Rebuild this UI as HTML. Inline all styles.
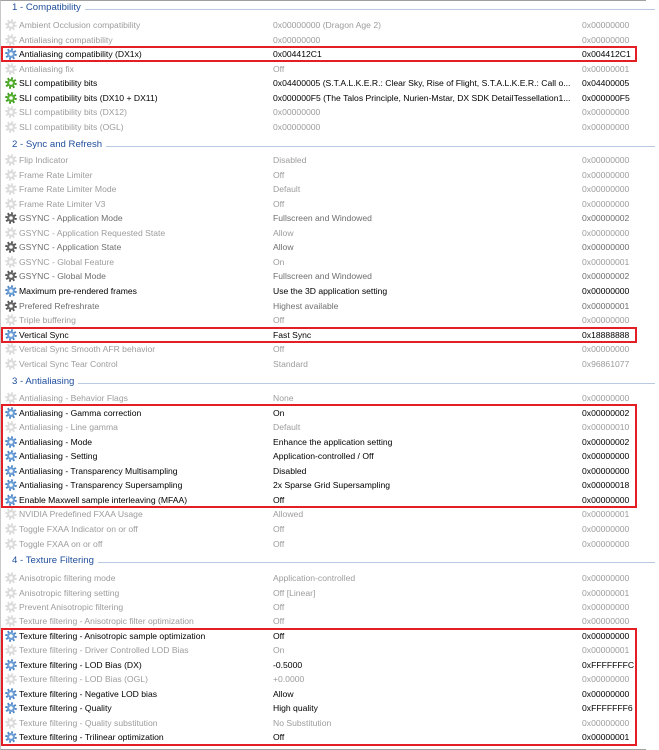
<!DOCTYPE html>
<html><head><meta charset="utf-8"><style>
html,body{margin:0;padding:0;background:#fff;}
body{width:659px;height:750px;position:relative;overflow:hidden;font-family:"Liberation Sans",Arial,sans-serif;font-size:8.6px;color:#000;}
.frame{position:absolute;left:0;top:0;width:645px;height:748px;border-top:1px solid #a0a0a0;border-left:1px solid #c8c8c8;border-bottom:1px solid #a0a0a0;}
.r{position:absolute;left:0;width:659px;height:14px;line-height:14px;white-space:nowrap;}
.r svg{position:absolute;left:5px;top:1px;width:12px;height:12px;}
.n{position:absolute;left:19px;}
.v{position:absolute;left:273px;}
.h{position:absolute;left:582px;}
.f{color:#9c9c9c;}
.d{color:#6e6e6e;}
.hd{position:absolute;left:0;width:659px;height:14px;line-height:14px;}
.hd span{position:absolute;left:12px;color:#1f4e9c;font-size:9.6px;background:#fff;padding-right:4px;}
.hd i{position:absolute;left:12px;right:4px;top:8px;border-top:1px solid #b9c9e2;}
.box{position:absolute;left:1px;width:632px;border:2px solid #e31e24;}
</style></head><body>
<svg width="0" height="0" style="position:absolute">
<defs>
<symbol id="gf" viewBox="0 0 12 12"><circle cx="6" cy="6" r="4.6" fill="none" stroke="#dcdcdc" stroke-width="2.4" stroke-dasharray="1.8 1.8"/><circle cx="6" cy="6" r="4" fill="#dcdcdc"/><circle cx="6" cy="6" r="1.8" fill="#fff"/></symbol>
<symbol id="gd" viewBox="0 0 12 12"><circle cx="6" cy="6" r="4.6" fill="none" stroke="#555" stroke-width="2.4" stroke-dasharray="1.8 1.8"/><circle cx="6" cy="6" r="4" fill="#666"/><circle cx="6" cy="6" r="1.8" fill="#fff"/></symbol>
<symbol id="gb" viewBox="0 0 12 12"><circle cx="6" cy="6" r="4.6" fill="none" stroke="#4f86c6" stroke-width="2.4" stroke-dasharray="1.8 1.8"/><circle cx="6" cy="6" r="4" fill="#6d9fd6"/><circle cx="6" cy="6" r="1.8" fill="#fff"/></symbol>
<symbol id="gg" viewBox="0 0 12 12"><circle cx="6" cy="6" r="4.6" fill="none" stroke="#3d9a1e" stroke-width="2.4" stroke-dasharray="1.8 1.8"/><circle cx="6" cy="6" r="4" fill="#55b02e"/><circle cx="6" cy="6" r="1.8" fill="#fff"/></symbol>
</defs></svg>
<div class="frame"></div>

<div class="hd" style="top:1px"><i></i><span>1 - Compatibility</span></div>
<div class="r f" style="top:18px"><svg><use href="#gf"/></svg><span class="n">Ambient Occlusion compatibility</span><span class="v">0x00000000 (Dragon Age 2)</span><span class="h">0x00000000</span></div>
<div class="r f" style="top:32.6px"><svg><use href="#gf"/></svg><span class="n">Antialiasing compatibility</span><span class="v">0x00000000</span><span class="h">0x00000000</span></div>
<div class="r" style="top:47.1px"><svg><use href="#gb"/></svg><span class="n">Antialiasing compatibility (DX1x)</span><span class="v">0x004412C1</span><span class="h">0x004412C1</span></div>
<div class="r f" style="top:61.7px"><svg><use href="#gf"/></svg><span class="n">Antialiasing fix</span><span class="v">Off</span><span class="h">0x00000001</span></div>
<div class="r" style="top:76.3px"><svg><use href="#gg"/></svg><span class="n">SLI compatibility bits</span><span class="v">0x04400005 (S.T.A.L.K.E.R.: Clear Sky, Rise of Flight, S.T.A.L.K.E.R.: Call o...</span><span class="h">0x04400005</span></div>
<div class="r" style="top:90.9px"><svg><use href="#gg"/></svg><span class="n">SLI compatibility bits (DX10 + DX11)</span><span class="v">0x000000F5 (The Talos Principle, Nurien-Mstar, DX SDK DetailTessellation1...</span><span class="h">0x000000F5</span></div>
<div class="r f" style="top:105.4px"><svg><use href="#gf"/></svg><span class="n">SLI compatibility bits (DX12)</span><span class="v">0x00000000</span><span class="h">0x00000000</span></div>
<div class="r f" style="top:120px"><svg><use href="#gf"/></svg><span class="n">SLI compatibility bits (OGL)</span><span class="v">0x00000000</span><span class="h">0x00000000</span></div>

<div class="hd" style="top:138px"><i></i><span>2 - Sync and Refresh</span></div>
<div class="r f" style="top:153px"><svg><use href="#gf"/></svg><span class="n">Flip Indicator</span><span class="v">Disabled</span><span class="h">0x00000000</span></div>
<div class="r f" style="top:167.6px"><svg><use href="#gf"/></svg><span class="n">Frame Rate Limiter</span><span class="v">Off</span><span class="h">0x00000000</span></div>
<div class="r f" style="top:182.1px"><svg><use href="#gf"/></svg><span class="n">Frame Rate Limiter Mode</span><span class="v">Default</span><span class="h">0x00000000</span></div>
<div class="r f" style="top:196.7px"><svg><use href="#gf"/></svg><span class="n">Frame Rate Limiter V3</span><span class="v">Off</span><span class="h">0x00000000</span></div>
<div class="r d" style="top:211.2px"><svg><use href="#gd"/></svg><span class="n">GSYNC - Application Mode</span><span class="v">Fullscreen and Windowed</span><span class="h">0x00000002</span></div>
<div class="r f" style="top:225.8px"><svg><use href="#gf"/></svg><span class="n">GSYNC - Application Requested State</span><span class="v">Allow</span><span class="h">0x00000000</span></div>
<div class="r d" style="top:240.3px"><svg><use href="#gd"/></svg><span class="n">GSYNC - Application State</span><span class="v">Allow</span><span class="h">0x00000000</span></div>
<div class="r f" style="top:254.9px"><svg><use href="#gf"/></svg><span class="n">GSYNC - Global Feature</span><span class="v">On</span><span class="h">0x00000001</span></div>
<div class="r d" style="top:269.4px"><svg><use href="#gd"/></svg><span class="n">GSYNC - Global Mode</span><span class="v">Fullscreen and Windowed</span><span class="h">0x00000002</span></div>
<div class="r" style="top:284px"><svg><use href="#gb"/></svg><span class="n">Maximum pre-rendered frames</span><span class="v">Use the 3D application setting</span><span class="h">0x00000000</span></div>
<div class="r d" style="top:298.5px"><svg><use href="#gd"/></svg><span class="n">Prefered Refreshrate</span><span class="v">Highest available</span><span class="h">0x00000001</span></div>
<div class="r f" style="top:313.1px"><svg><use href="#gf"/></svg><span class="n">Triple buffering</span><span class="v">Off</span><span class="h">0x00000000</span></div>
<div class="r" style="top:327.6px"><svg><use href="#gb"/></svg><span class="n">Vertical Sync</span><span class="v">Fast Sync</span><span class="h">0x18888888</span></div>
<div class="r f" style="top:342.2px"><svg><use href="#gf"/></svg><span class="n">Vertical Sync Smooth AFR behavior</span><span class="v">Off</span><span class="h">0x00000000</span></div>
<div class="r f" style="top:356.7px"><svg><use href="#gf"/></svg><span class="n">Vertical Sync Tear Control</span><span class="v">Standard</span><span class="h">0x96861077</span></div>

<div class="hd" style="top:375px"><i></i><span>3 - Antialiasing</span></div>
<div class="r f" style="top:391px"><svg><use href="#gf"/></svg><span class="n">Antialiasing - Behavior Flags</span><span class="v">None</span><span class="h">0x00000000</span></div>
<div class="r" style="top:405.6px"><svg><use href="#gb"/></svg><span class="n">Antialiasing - Gamma correction</span><span class="v">On</span><span class="h">0x00000002</span></div>
<div class="r f" style="top:420.1px"><svg><use href="#gf"/></svg><span class="n">Antialiasing - Line gamma</span><span class="v">Default</span><span class="h">0x00000010</span></div>
<div class="r" style="top:434.7px"><svg><use href="#gb"/></svg><span class="n">Antialiasing - Mode</span><span class="v">Enhance the application setting</span><span class="h">0x00000002</span></div>
<div class="r" style="top:449.2px"><svg><use href="#gb"/></svg><span class="n">Antialiasing - Setting</span><span class="v">Application-controlled / Off</span><span class="h">0x00000000</span></div>
<div class="r" style="top:463.8px"><svg><use href="#gb"/></svg><span class="n">Antialiasing - Transparency Multisampling</span><span class="v">Disabled</span><span class="h">0x00000000</span></div>
<div class="r" style="top:478.3px"><svg><use href="#gb"/></svg><span class="n">Antialiasing - Transparency Supersampling</span><span class="v">2x Sparse Grid Supersampling</span><span class="h">0x00000018</span></div>
<div class="r" style="top:492.9px"><svg><use href="#gb"/></svg><span class="n">Enable Maxwell sample interleaving (MFAA)</span><span class="v">Off</span><span class="h">0x00000000</span></div>
<div class="r f" style="top:507.4px"><svg><use href="#gf"/></svg><span class="n">NVIDIA Predefined FXAA Usage</span><span class="v">Allowed</span><span class="h">0x00000001</span></div>
<div class="r f" style="top:522px"><svg><use href="#gf"/></svg><span class="n">Toggle FXAA Indicator on or off</span><span class="v">Off</span><span class="h">0x00000000</span></div>
<div class="r f" style="top:536.5px"><svg><use href="#gf"/></svg><span class="n">Toggle FXAA on or off</span><span class="v">Off</span><span class="h">0x00000000</span></div>

<div class="hd" style="top:554px"><i></i><span>4 - Texture Filtering</span></div>
<div class="r f" style="top:571px"><svg><use href="#gf"/></svg><span class="n">Anisotropic filtering mode</span><span class="v">Application-controlled</span><span class="h">0x00000000</span></div>
<div class="r f" style="top:585.5px"><svg><use href="#gf"/></svg><span class="n">Anisotropic filtering setting</span><span class="v">Off [Linear]</span><span class="h">0x00000001</span></div>
<div class="r f" style="top:599.9px"><svg><use href="#gf"/></svg><span class="n">Prevent Anisotropic filtering</span><span class="v">Off</span><span class="h">0x00000000</span></div>
<div class="r f" style="top:614.4px"><svg><use href="#gf"/></svg><span class="n">Texture filtering - Anisotropic filter optimization</span><span class="v">Off</span><span class="h">0x00000000</span></div>
<div class="r" style="top:628.8px"><svg><use href="#gb"/></svg><span class="n">Texture filtering - Anisotropic sample optimization</span><span class="v">Off</span><span class="h">0x00000000</span></div>
<div class="r f" style="top:643.3px"><svg><use href="#gf"/></svg><span class="n">Texture filtering - Driver Controlled LOD Bias</span><span class="v">On</span><span class="h">0x00000001</span></div>
<div class="r" style="top:657.8px"><svg><use href="#gb"/></svg><span class="n">Texture filtering - LOD Bias (DX)</span><span class="v">-0.5000</span><span class="h">0xFFFFFFFC</span></div>
<div class="r f" style="top:672.2px"><svg><use href="#gf"/></svg><span class="n">Texture filtering - LOD Bias (OGL)</span><span class="v">+0.0000</span><span class="h">0x00000000</span></div>
<div class="r" style="top:686.7px"><svg><use href="#gb"/></svg><span class="n">Texture filtering - Negative LOD bias</span><span class="v">Allow</span><span class="h">0x00000000</span></div>
<div class="r" style="top:701.1px"><svg><use href="#gb"/></svg><span class="n">Texture filtering - Quality</span><span class="v">High quality</span><span class="h">0xFFFFFFF6</span></div>
<div class="r f" style="top:715.6px"><svg><use href="#gf"/></svg><span class="n">Texture filtering - Quality substitution</span><span class="v">No Substitution</span><span class="h">0x00000000</span></div>
<div class="r" style="top:730.1px"><svg><use href="#gb"/></svg><span class="n">Texture filtering - Trilinear optimization</span><span class="v">Off</span><span class="h">0x00000001</span></div>

<div class="box" style="top:46px;height:12px"></div>
<div class="box" style="top:327px;height:12px"></div>
<div class="box" style="top:404px;height:100px"></div>
<div class="box" style="top:628px;height:114px"></div>
</body></html>
